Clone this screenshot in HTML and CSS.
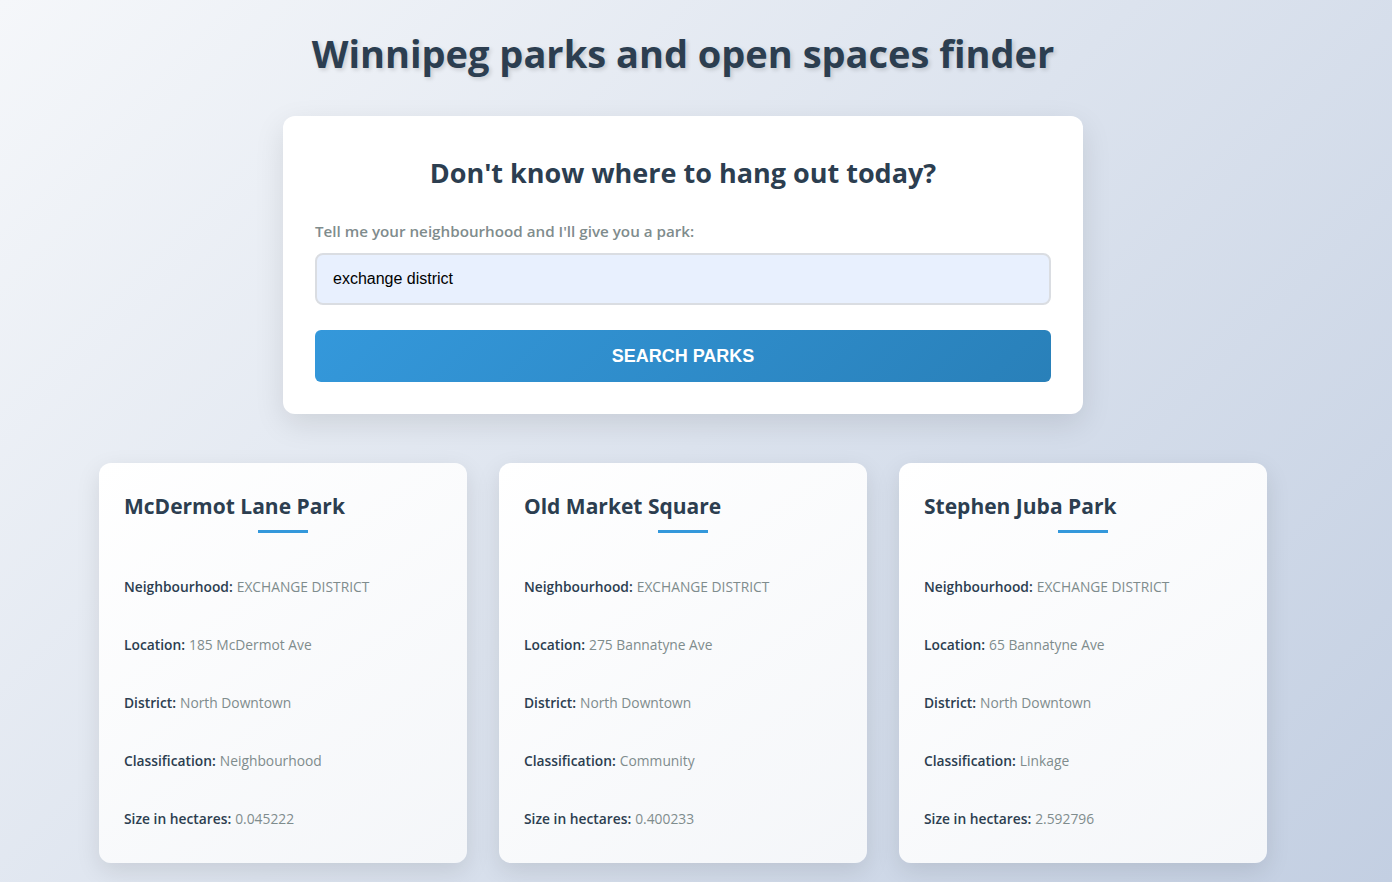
FILE: index.html
```html
<!DOCTYPE html>
<html lang="en">
<head>
<meta charset="utf-8">
<title>Winnipeg parks and open spaces finder</title>
<link rel="stylesheet" href="styles.css">
</head>
<body>
<div class="page">
  <h1 class="title">Winnipeg parks and open spaces finder</h1>
  <section class="search-card">
    <h2 class="search-heading">Don't know where to hang out today?</h2>
    <label class="search-label" for="hood">Tell me your neighbourhood and I'll give you a park:</label>
    <input class="search-input" id="hood" type="text" value="exchange district">
    <button class="search-button" type="button">SEARCH PARKS</button>
  </section>
  <div class="results">
    <article class="park-card">
      <h3 class="park-name">McDermot Lane Park</h3>
      <div class="park-divider"></div>
      <p class="park-row"><span class="park-key">Neighbourhood:</span> <span class="park-val">EXCHANGE DISTRICT</span></p>
      <p class="park-row"><span class="park-key">Location:</span> <span class="park-val">185 McDermot Ave</span></p>
      <p class="park-row"><span class="park-key">District:</span> <span class="park-val">North Downtown</span></p>
      <p class="park-row"><span class="park-key">Classification:</span> <span class="park-val">Neighbourhood</span></p>
      <p class="park-row"><span class="park-key">Size in hectares:</span> <span class="park-val">0.045222</span></p>
    </article>
    <article class="park-card">
      <h3 class="park-name">Old Market Square</h3>
      <div class="park-divider"></div>
      <p class="park-row"><span class="park-key">Neighbourhood:</span> <span class="park-val">EXCHANGE DISTRICT</span></p>
      <p class="park-row"><span class="park-key">Location:</span> <span class="park-val">275 Bannatyne Ave</span></p>
      <p class="park-row"><span class="park-key">District:</span> <span class="park-val">North Downtown</span></p>
      <p class="park-row"><span class="park-key">Classification:</span> <span class="park-val">Community</span></p>
      <p class="park-row"><span class="park-key">Size in hectares:</span> <span class="park-val">0.400233</span></p>
    </article>
    <article class="park-card">
      <h3 class="park-name">Stephen Juba Park</h3>
      <div class="park-divider"></div>
      <p class="park-row"><span class="park-key">Neighbourhood:</span> <span class="park-val">EXCHANGE DISTRICT</span></p>
      <p class="park-row"><span class="park-key">Location:</span> <span class="park-val">65 Bannatyne Ave</span></p>
      <p class="park-row"><span class="park-key">District:</span> <span class="park-val">North Downtown</span></p>
      <p class="park-row"><span class="park-key">Classification:</span> <span class="park-val">Linkage</span></p>
      <p class="park-row"><span class="park-key">Size in hectares:</span> <span class="park-val">2.592796</span></p>
    </article>
  </div>
</div>
</body>
</html>
```

FILE: styles.css
```css
* { box-sizing: border-box; }

html, body {
  margin: 0;
  padding: 0;
  height: 100%;
}

body {
  font-family: "Open Sans", "Noto Sans", sans-serif;
  background: linear-gradient(135deg, #f5f7fa 0%, #c3cfe2 100%);
  color: #2c3e50;
  overflow: hidden;
}

.page {
  width: 1366px;
  display: flex;
  flex-direction: column;
  align-items: center;
  padding-top: 28px;
}

.title {
  margin: 0;
  font-size: 38px;
  line-height: 50px;
  font-weight: 700;
  color: #2c3e50;
  text-shadow: 2px 2px 4px rgba(0, 0, 0, 0.15);
}

.search-card {
  margin-top: 38px;
  width: 800px;
  background: #ffffff;
  border-radius: 12px;
  box-shadow: 0 10px 30px rgba(0, 0, 0, 0.1);
  padding: 39px 32px 32px;
  display: flex;
  flex-direction: column;
}

.search-heading {
  margin: 0;
  font-size: 27px;
  line-height: 36px;
  font-weight: 700;
  text-align: center;
  color: #2c3e50;
}

.search-label {
  margin-top: 29px;
  font-size: 15.2px;
  line-height: 22px;
  font-weight: 600;
  color: #7f8c8d;
}

.search-input {
  margin-top: 11px;
  height: 52px;
  padding: 0 16px;
  font-family: "Liberation Sans", Arial, sans-serif;
  font-size: 16px;
  color: #000;
  background: #e8f0fe;
  border: 2px solid #dadde2;
  border-radius: 8px;
  outline: none;
}

.search-button {
  margin-top: 25px;
  height: 52px;
  border: none;
  border-radius: 6px;
  background: linear-gradient(135deg, #3498db 0%, #2980b9 100%);
  color: #ffffff;
  font-family: "Liberation Sans", Arial, sans-serif;
  font-size: 18px;
  font-weight: 700;
  cursor: pointer;
}

.results {
  margin-top: 49px;
  display: grid;
  grid-template-columns: repeat(3, 368px);
  gap: 32px;
}

.park-card {
  height: 400px;
  background: linear-gradient(145deg, #ffffff 0%, #f4f6f9 100%);
  border-radius: 12px;
  box-shadow: 0 8px 24px rgba(0, 0, 0, 0.1);
  padding: 28px 25px 14px;
}

.park-name {
  margin: 0;
  font-size: 21px;
  line-height: 30px;
  font-weight: 700;
  color: #2c3e50;
}

.park-divider {
  width: 50px;
  height: 3px;
  background: #3498db;
  margin: 9px auto 24px;
}

.park-row {
  margin: 0;
  height: 58px;
  display: flex;
  align-items: center;
  gap: 4px;
  font-size: 13.8px;
}

.park-key {
  font-weight: 600;
  color: #2c3e50;
}

.park-val {
  color: #7f8c8d;
}
```
